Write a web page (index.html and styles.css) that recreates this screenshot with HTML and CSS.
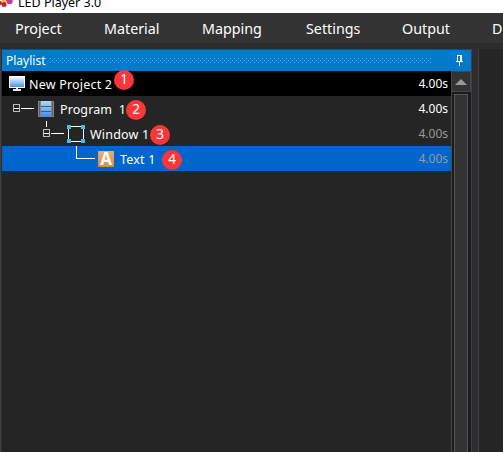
FILE: index.html
```
<!DOCTYPE html>
<html lang="en">
<head>
  <meta charset="UTF-8">
  <title>LED Player 3.0</title>
  <link rel="stylesheet" href="styles.css">
</head>
<body>

  <header class="titlebar">
    <svg class="logo" width="14" height="13" viewBox="0 0 14 13">
      <circle cx="4" cy="0" r="2.6" fill="#f2c230"/>
      <circle cx="4" cy="4.500" r="2.500" fill="#d01c2c"/>
      <circle cx="0" cy="3" r="2" fill="#d01c2c"/>
      <circle cx="9.500" cy="1" r="3.200" fill="#c8359c"/>
    </svg>
    <span class="app-name">LED Player 3.0</span>
  </header>

  <nav class="menu">
    <span class="m-project">Project</span>
    <span class="m-material">Material</span>
    <span class="m-mapping">Mapping</span>
    <span class="m-settings">Settings</span>
    <span class="m-output">Output</span>
    <span>D</span>
  </nav>

  <main class="workspace">
    <section class="panel">
      <div class="panel-head">
        <span class="panel-title">Playlist</span>
        <span class="grip"></span>
        <svg class="pin" width="7" height="11" viewBox="0 0 7 11" shape-rendering="crispEdges">
          <path d="M1 0h5v6h1v1H4v4H3V7H0V6h1z" fill="#fff"/>
          <path d="M2 1h2v5H2z" fill="#007acc"/>
        </svg>
      </div>

      <div class="panel-body">
        <div class="tree">
          <div class="row root">
            <svg class="icon" width="16" height="16" viewBox="0 0 16 16">
              <defs>
                <linearGradient id="screen" x1="0" y1="0" x2="0" y2="1">
                  <stop offset="0" stop-color="#f4f9ff"/>
                  <stop offset="1" stop-color="#4a94ea"/>
                </linearGradient>
              </defs>
              <path d="M0 0h16v12H0z" fill="#fff"/>
              <path d="M1 1h14v10H1z" fill="url(#screen)"/>
              <path d="M7 12h2v1h3v2H4v-2h3z" fill="#e8e8e8"/>
            </svg>
            <span class="name">New Project 2</span>
            <span class="badge">1</span>
            <span class="time">4.00s</span>
          </div>

          <div class="row program">
            <svg class="branch" width="23" height="9" viewBox="0 0 23 9" shape-rendering="crispEdges">
              <path d="M2.500.500h6v7h-6z" fill="#252525" stroke="#bbb"/>
              <path d="M3 4.500h5" stroke="#fff"/>
              <path d="M10 4.500h13" stroke="#fff"/>
            </svg>
            <svg class="icon" width="16" height="16" viewBox="0 0 16 16">
              <defs>
                <linearGradient id="film" x1="0" y1="0" x2="0" y2="1">
                  <stop offset="0" stop-color="#b4d4fa"/>
                  <stop offset="1" stop-color="#3f8be6"/>
                </linearGradient>
              </defs>
              <path d="M0 0h16v16H0z" fill="#858585"/>
              <path d="M3 0h10v16H3z" fill="url(#film)"/>
              <path d="M1.500 1v14M14.500 1v14" stroke="#5c5c5c"/>
              <path d="M3 5.500h10M3 10.500h10" stroke="#3c5e86"/>
            </svg>
            <span class="name">Program&nbsp; 1</span>
            <span class="badge">2</span>
            <span class="time">4.00s</span>
          </div>

          <div class="row window">
            <svg class="branch" width="23" height="25" viewBox="0 0 23 25" shape-rendering="crispEdges">
              <path d="M5.500 -2v8" stroke="#fff"/>
              <path d="M2.500 8.500h6v7h-6z" fill="#252525" stroke="#bbb"/>
              <path d="M3 12.500h5" stroke="#fff"/>
              <path d="M10 12.500h13" stroke="#fff"/>
            </svg>
            <svg class="icon" width="18" height="18" viewBox="0 0 18 18">
              <path d="M1.500 1.500h15v15h-15z" fill="none" stroke="#fff"/>
              <path d="M0 0h4v4H0zM14 0h4v4h-4zM0 14h4v4H0zM14 14h4v4h-4z" fill="#38c4f0"/>
            </svg>
            <span class="name">Window 1</span>
            <span class="badge">3</span>
            <span class="time">4.00s</span>
          </div>

          <div class="row text selected">
            <svg class="branch" width="19" height="25" viewBox="0 0 19 25" shape-rendering="crispEdges">
              <path d="M.500 -2v14.500H19" fill="none" stroke="#fff"/>
            </svg>
            <span class="letter">A</span>
            <span class="name">Text 1</span>
            <span class="badge">4</span>
            <span class="time">4.00s</span>
          </div>
        </div>

        <div class="scrollbar">
          <div class="arrow">
            <svg width="12" height="6" viewBox="0 0 12 6"><path d="M6 0l6 6H0z" fill="#999"/></svg>
          </div>
          <div class="thumb"></div>
        </div>
      </div>
    </section>

    <section class="canvas"></section>
  </main>

</body>
</html>
```
FILE: styles.css
```
* {
  box-sizing: border-box;
}

body {
  margin: 0;
  height: 452px;
  overflow: hidden;
  display: flex;
  flex-direction: column;
  background: #2d2d30;
  color: #fff;
  font-family: "Noto Sans", "Open Sans", sans-serif;
}

.titlebar {
  height: 13px;
  flex: none;
  display: flex;
  overflow: hidden;
  background: #fff;
  color: #000;
}

.app-name {
  margin: -7px 0 0 4px;
  font-size: 12.5px;
  line-height: 20px;
  white-space: nowrap;
}

.menu {
  height: 30px;
  flex: none;
  display: flex;
  padding-left: 15px;
  overflow: hidden;
  background: #333;
  font-size: 14.3px;
  line-height: 32px;
  white-space: nowrap;
}

.menu span {
  flex: none;
}

.m-project { width: 89px; }
.m-material { width: 98px; }
.m-mapping { width: 104px; }
.m-settings { width: 96px; }
.m-output { width: 90px; }

.workspace {
  flex: 1;
  display: flex;
  padding-top: 6px;
  background: #2d2d30;
}

.panel {
  width: 472px;
  display: flex;
  flex-direction: column;
  border: solid #3f3f46;
  border-width: 1px 1px 0;
  margin-right: 6px;
}

.panel-head {
  height: 21px;
  margin-left: 1px;
  display: flex;
  align-items: center;
  padding: 0 8px 0 4px;
  background: #007acc;
}

.panel-title {
  width: 44px;
  font-size: 12px;
  line-height: 20px;
}

.grip {
  width: 382px;
  height: 5px;
  background:
    conic-gradient(from 270deg at 1px 1px, #5fabe0 90deg, transparent 0) 0 0 / 4px 4px,
    conic-gradient(from 270deg at 1px 1px, #5fabe0 90deg, transparent 0) 2px 2px / 4px 4px;
}

.pin {
  margin-left: auto;
}

.panel-body {
  flex: 1;
  display: flex;
  margin-left: 1px;
}

.tree {
  flex: 1;
  background: #252525;
}

.row {
  height: 25px;
  display: flex;
  align-items: center;
  position: relative;
  font-size: 12.5px;
  line-height: 25px;
  white-space: pre;
}

.name {
  padding-top: 2px;
  letter-spacing: 0.2px;
}

.icon,
.branch {
  flex: none;
}

.root {
  padding-left: 7px;
  background: #000;
}

.root .name { margin-left: 4px; }

.program { padding-left: 9px; }
.program .branch { margin-right: 4px; }
.program .name { margin-left: 6px; letter-spacing: 0.1px; }

.window { padding-left: 39px; }
.window .branch { margin-right: 3px; }
.window .name { margin-left: 5px; }

.text { padding-left: 74px; }
.text .name { margin-left: 6px; }

.selected {
  background: #0066cc;
}

.letter {
  width: 16px;
  height: 16px;
  margin-left: 3px;
  background: linear-gradient(#e8b070, #e08a35);
  border-radius: 1px;
  font: bold 17px/16px "Open Sans", sans-serif;
  text-align: center;
}

.time {
  margin-left: auto;
  margin-right: 3px;
  font-size: 12px;
}

.window .time,
.selected .time {
  color: #999;
}

.badge {
  position: absolute;
  z-index: 1;
  width: 20px;
  height: 20px;
  border-radius: 50%;
  background: #fb3638;
  font: 13.5px/19px "Noto Sans", sans-serif;
  text-align: center;
}

.root .badge { left: 112px; top: -1px; }
.program .badge { left: 124px; top: 4px; }
.window .badge { left: 148px; top: 4px; }
.text .badge { left: 160px; top: 4px; }

.scrollbar {
  width: 20px;
  display: flex;
  flex-direction: column;
  background: #1b1b1c;
  border-left: 1px solid #464646;
}

.arrow {
  height: 21px;
  display: flex;
  align-items: center;
  justify-content: center;
  background: #333;
  border: 1px solid #464646;
  border-left: 0;
}

.thumb {
  flex: 1;
  margin: 2px 3px 0 2px;
  background: #333;
  border: solid #555;
  border-width: 1px 1px 0;
}

.canvas {
  flex: 1;
  background: #252525;
  border-left: 1px solid #3f3f46;
}
```
